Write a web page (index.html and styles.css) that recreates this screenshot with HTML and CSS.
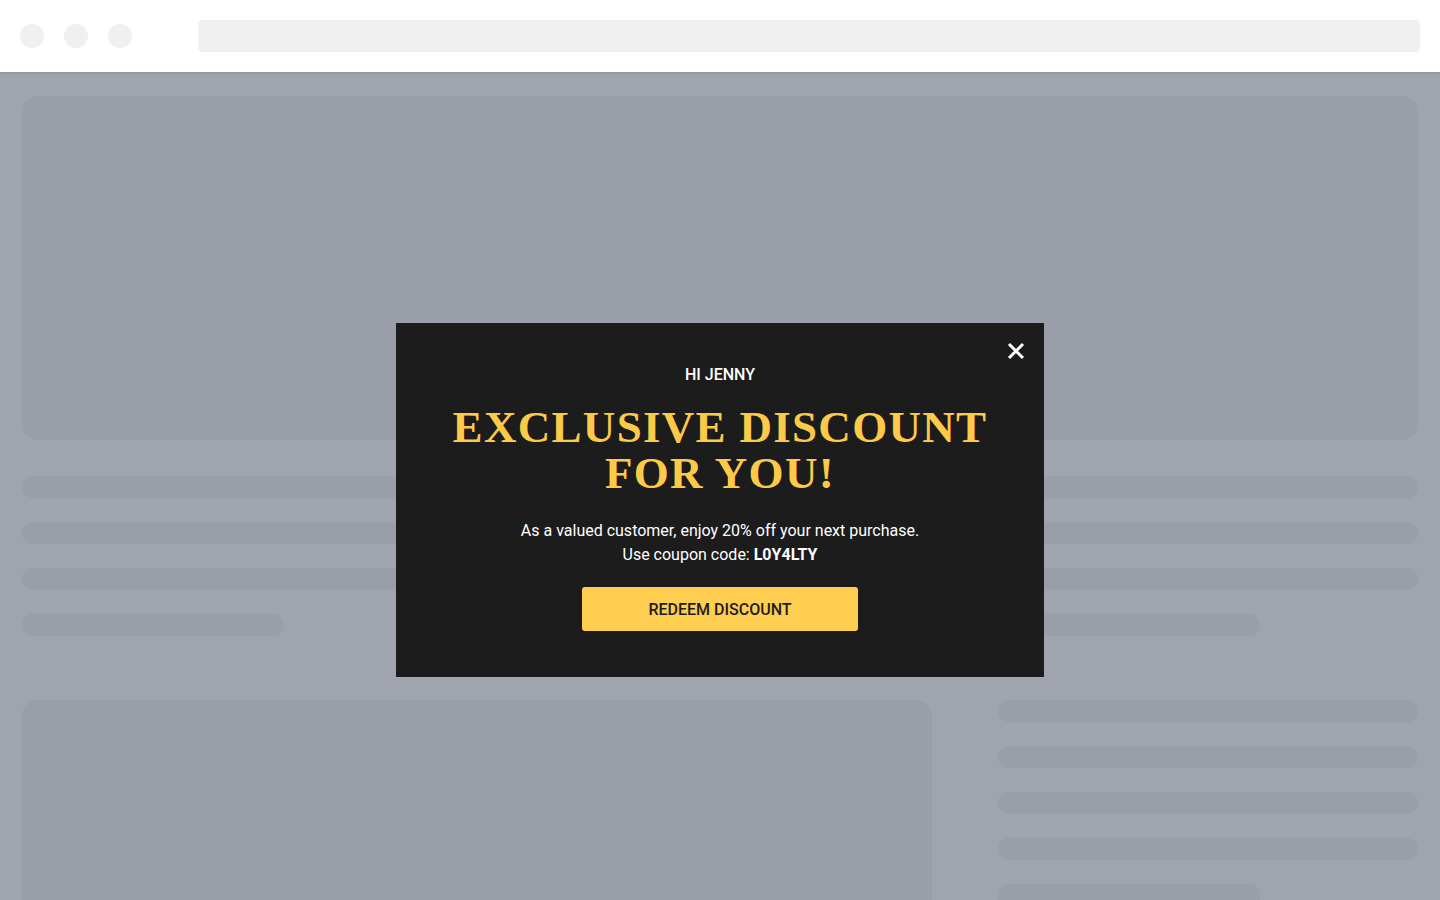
FILE: index.html
```html
<!DOCTYPE html>
<html lang="en">
<head>
  <meta charset="UTF-8">
  <meta name="viewport" content="width=device-width, initial-scale=1.0">
  <title>Exclusive Discount</title>
  <link rel="stylesheet" href="styles.css">
</head>
<body>
  <div class="browser-bar">
    <div class="dots">
      <span class="dot"></span>
      <span class="dot"></span>
      <span class="dot"></span>
    </div>
    <div class="url-bar"></div>
  </div>

  <div class="page">
    <div class="hero"></div>

    <div class="lines">
      <div class="line"></div>
      <div class="line"></div>
      <div class="line"></div>
      <div class="split">
        <div class="line short"></div>
        <div class="line short"></div>
      </div>
    </div>

    <div class="bottom">
      <div class="panel"></div>
      <div class="side">
        <div class="line"></div>
        <div class="line"></div>
        <div class="line"></div>
        <div class="line"></div>
        <div class="line short last"></div>
      </div>
    </div>
  </div>

  <div class="overlay">
    <div class="modal">
      <button class="close" aria-label="Close">
        <svg width="18" height="18" viewBox="0 0 18 18">
          <path d="M2 2 L16 16 M16 2 L2 16" stroke="#fff" stroke-width="3" stroke-linecap="butt"/>
        </svg>
      </button>
      <p class="greeting">HI JENNY</p>
      <h1 class="headline">EXCLUSIVE DISCOUNT<br>FOR YOU!</h1>
      <p class="message">As a valued customer, enjoy 20% off your next purchase.<br>Use coupon code: <strong>L0Y4LTY</strong></p>
      <button class="redeem">REDEEM DISCOUNT</button>
    </div>
  </div>
</body>
</html>
```

FILE: styles.css
```css
html, body {
  height: 100%;
}
body {
  margin: 0;
  background: #a0a4ae;
  font-family: Roboto, "Liberation Sans", sans-serif;
  overflow: hidden;
}
.browser-bar {
  height: 72px;
  background: #fff;
  display: flex;
  align-items: center;
  padding: 0 20px;
  box-shadow: 0 1px 3px rgba(0, 0, 0, 0.12);
  position: relative;
}
.dots {
  display: flex;
  gap: 20px;
  margin-right: 66px;
}
.dot {
  width: 24px;
  height: 24px;
  border-radius: 50%;
  background: #f0f0f0;
}
.url-bar {
  flex: 1;
  height: 32px;
  background: #f0f0f0;
  border-radius: 4px;
}
.page {
  height: 828px;
  box-sizing: border-box;
  padding: 24px 22px 0;
  overflow: hidden;
}
.hero {
  height: 344px;
  background: #9a9ea9;
  border-radius: 16px;
}
.lines {
  margin-top: 36px;
  display: flex;
  flex-direction: column;
  gap: 24px;
}
.line {
  height: 22px;
  border-radius: 11px;
  background: #9a9ea9;
}
.line.short {
  width: 262px;
}
.line.last {
  height: 16px;
  border-radius: 11px 11px 0 0;
}
.split {
  display: grid;
  grid-template-columns: 910px 1fr;
  gap: 66px;
}
.bottom {
  margin-top: 64px;
  display: grid;
  grid-template-columns: 910px 1fr;
  gap: 66px;
}
.panel {
  height: 200px;
  background: #9a9ea9;
  border-radius: 16px 16px 0 0;
}
.side {
  display: flex;
  flex-direction: column;
  gap: 24px;
}
.overlay {
  position: fixed;
  inset: 0;
  display: flex;
  justify-content: center;
  align-items: flex-start;
  padding-top: 323px;
}
.modal {
  position: relative;
  width: 648px;
  box-sizing: border-box;
  background: #1c1c1c;
  padding: 42px 40px 46px;
  text-align: center;
  color: #fff;
}
.close {
  position: absolute;
  top: 19px;
  right: 19px;
  width: 18px;
  height: 18px;
  padding: 0;
  border: none;
  background: none;
  cursor: pointer;
}
.close svg {
  display: block;
}
.greeting {
  margin: 0;
  font-size: 16px;
  line-height: 20px;
  font-weight: 500;
}
.headline {
  margin: 19px 0 0;
  font-family: "Liberation Serif", "Times New Roman", serif;
  font-weight: 700;
  font-size: 45px;
  line-height: 46px;
  letter-spacing: 1.3px;
  color: #fcca48;
}
.message {
  margin: 23px 0 0;
  font-size: 16px;
  line-height: 24px;
}
.message strong {
  font-weight: 700;
}
.redeem {
  margin-top: 20px;
  width: 276px;
  height: 44px;
  border: none;
  border-radius: 3px;
  background: #ffcd50;
  color: #1c1c1c;
  font-family: Roboto, "Liberation Sans", sans-serif;
  font-size: 16px;
  font-weight: 500;
  cursor: pointer;
}
```
